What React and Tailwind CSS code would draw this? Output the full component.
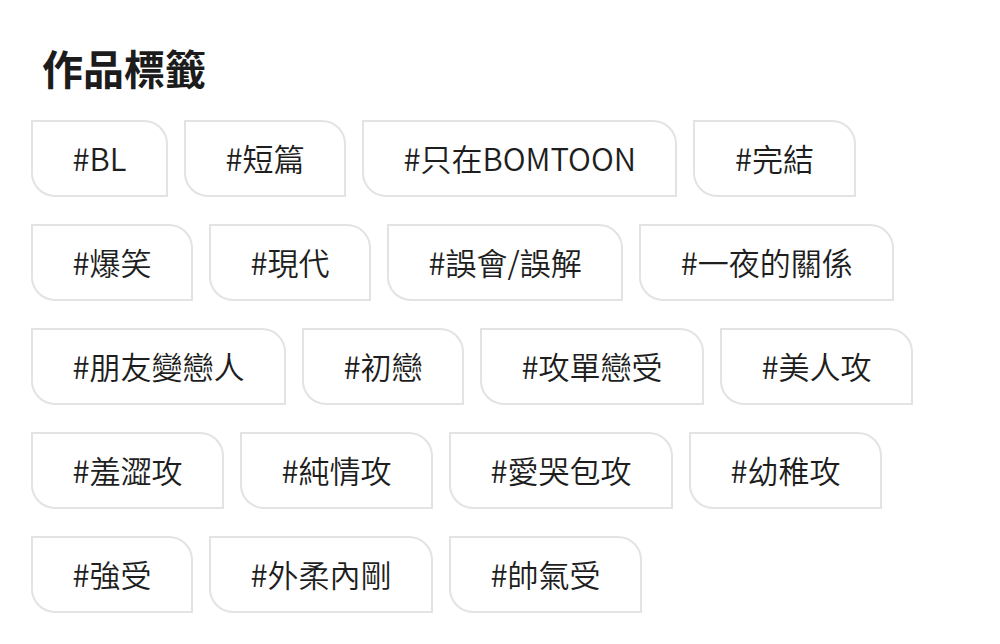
export default function App() {
  const tags = [
    "#BL", "#短篇", "#只在BOMTOON", "#完結",
    "#爆笑", "#現代", "#誤會/誤解", "#一夜的關係",
    "#朋友變戀人", "#初戀", "#攻單戀受", "#美人攻",
    "#羞澀攻", "#純情攻", "#愛哭包攻", "#幼稚攻",
    "#強受", "#外柔內剛", "#帥氣受",
  ];
  return (
    <div
      className="w-[1000px] h-[644px] bg-white overflow-hidden px-[31px] pt-[42px]"
      style={{ fontFamily: '"Noto Sans CJK TC", "Noto Sans", sans-serif' }}
    >
      <h2 className="pl-[11px] text-[41px] leading-[50px] font-bold text-[#1c1c1c]">作品標籤</h2>
      <div className="mt-[28px] flex flex-wrap gap-x-[16px] gap-y-[27px]">
        {tags.map((t) => (
          <div
            key={t}
            className="h-[77px] flex items-center px-[39.5px] border-2 border-[#e3e3e3] rounded-tr-[24px] rounded-bl-[24px] text-[31px] font-[350] text-[#1e1e1e]"
          >
            {t}
          </div>
        ))}
      </div>
    </div>
  );
}
